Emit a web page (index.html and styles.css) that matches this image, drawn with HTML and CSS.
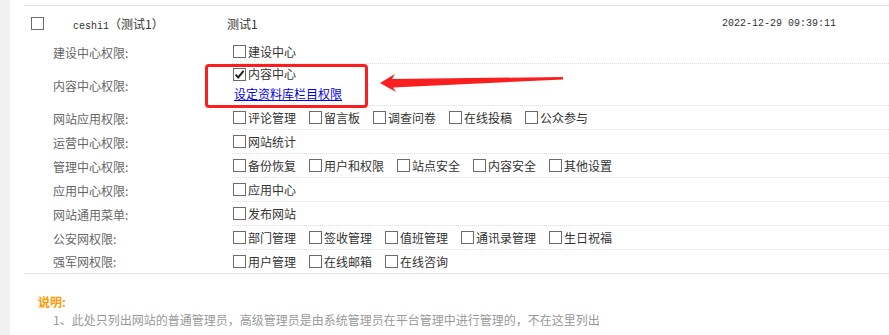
FILE: index.html
```html
<!DOCTYPE html>
<html lang="zh-CN">
<head>
  <meta charset="UTF-8">
  <title>管理员权限</title>
  <link rel="stylesheet" href="styles.css">
</head>
<body>
  <div class="main">
    <div class="user-table">
      <div class="user-row">
        <span class="col-check"><input type="checkbox" class="cb"></span>
        <span class="col-name"><span class="mono">ceshi1</span>（测试1）</span>
        <span class="col-title">测试1</span>
        <span class="col-date mono">2022-12-29 09:39:11</span>
      </div>

      <div class="perm-row">
        <div class="perm-label">建设中心权限:</div>
        <div class="perm-items">
          <label class="item"><input type="checkbox" class="cb">建设中心</label>
        </div>
      </div>

      <div class="perm-row">
        <div class="perm-label">内容中心权限:</div>
        <div class="perm-items perm-items-stack">
          <label class="item"><input type="checkbox" class="cb" checked>内容中心</label>
          <a href="#" class="perm-link">设定资料库栏目权限</a>
        </div>
      </div>

      <div class="perm-row">
        <div class="perm-label">网站应用权限:</div>
        <div class="perm-items">
          <label class="item"><input type="checkbox" class="cb">评论管理</label>
          <label class="item"><input type="checkbox" class="cb">留言板</label>
          <label class="item"><input type="checkbox" class="cb">调查问卷</label>
          <label class="item"><input type="checkbox" class="cb">在线投稿</label>
          <label class="item"><input type="checkbox" class="cb">公众参与</label>
        </div>
      </div>

      <div class="perm-row">
        <div class="perm-label">运营中心权限:</div>
        <div class="perm-items">
          <label class="item"><input type="checkbox" class="cb">网站统计</label>
        </div>
      </div>

      <div class="perm-row">
        <div class="perm-label">管理中心权限:</div>
        <div class="perm-items">
          <label class="item"><input type="checkbox" class="cb">备份恢复</label>
          <label class="item"><input type="checkbox" class="cb">用户和权限</label>
          <label class="item"><input type="checkbox" class="cb">站点安全</label>
          <label class="item"><input type="checkbox" class="cb">内容安全</label>
          <label class="item"><input type="checkbox" class="cb">其他设置</label>
        </div>
      </div>

      <div class="perm-row">
        <div class="perm-label">应用中心权限:</div>
        <div class="perm-items">
          <label class="item"><input type="checkbox" class="cb">应用中心</label>
        </div>
      </div>

      <div class="perm-row">
        <div class="perm-label">网站通用菜单:</div>
        <div class="perm-items">
          <label class="item"><input type="checkbox" class="cb">发布网站</label>
        </div>
      </div>

      <div class="perm-row">
        <div class="perm-label">公安网权限:</div>
        <div class="perm-items">
          <label class="item"><input type="checkbox" class="cb">部门管理</label>
          <label class="item"><input type="checkbox" class="cb">签收管理</label>
          <label class="item"><input type="checkbox" class="cb">值班管理</label>
          <label class="item"><input type="checkbox" class="cb">通讯录管理</label>
          <label class="item"><input type="checkbox" class="cb">生日祝福</label>
        </div>
      </div>

      <div class="perm-row perm-row-last">
        <div class="perm-label">强军网权限:</div>
        <div class="perm-items">
          <label class="item"><input type="checkbox" class="cb">用户管理</label>
          <label class="item"><input type="checkbox" class="cb">在线邮箱</label>
          <label class="item"><input type="checkbox" class="cb">在线咨询</label>
        </div>
      </div>
    </div>

    <div class="notes">
      <div class="notes-title">说明:</div>
      <div class="notes-line">1、此处只列出网站的普通管理员，高级管理员是由系统管理员在平台管理中进行管理的，不在这里列出</div>
    </div>

    <!-- annotation overlay -->
    <div class="mark-box"></div>
    <svg class="mark-arrow" width="200" height="24" viewBox="0 0 200 24">
      <polygon points="0,13 15,4 12,9 183,7 183,9.5 13,17.5 16,22" fill="#fa1e1e"/>
    </svg>
  </div>
</body>
</html>
```

FILE: styles.css
```css
* {
  margin: 0;
  padding: 0;
  box-sizing: border-box;
}

body {
  background-color: #f1f1f1;
  font-family: "Noto Sans CJK SC", "Noto Sans", sans-serif;
  font-size: 12px;
  color: #333;
  overflow: hidden;
}

.main {
  position: relative;
  margin-left: 10px;
  height: 335px;
  padding-top: 5px;
  background: white;
}

.mono {
  font-family: "Liberation Mono", monospace;
  font-size: 10px;
}

/* Checkbox */
.cb {
  appearance: none;
  -webkit-appearance: none;
  width: 13px;
  height: 13px;
  border: 1px solid #6b6b6b;
  background: white;
  flex: none;
  margin: 0;
}

.cb:checked {
  background: white url("data:image/svg+xml;utf8,<svg xmlns='http://www.w3.org/2000/svg' width='11' height='11' viewBox='0 0 11 11'><path d='M1.6 5.6 L4.2 8.4 L9.6 1.8' fill='none' stroke='%23222' stroke-width='2'/></svg>") no-repeat center;
}

/* Table */
.user-table {
  margin-left: 14px;
  border-top: 1px solid #e4e4e4;
  border-bottom: 1px solid #e4e4e4;
}

.user-row {
  display: flex;
  align-items: center;
  height: 34px;
}

.col-check {
  display: flex;
  width: 49px;
  padding-left: 7px;
}

.col-name {
  width: 154px;
}

.col-title {
  width: 495px;
}

.perm-row {
  display: grid;
  grid-template-columns: 208px 1fr;
}

.perm-label {
  display: flex;
  align-items: center;
  padding-left: 29px;
  color: #666;
}

.perm-items {
  display: flex;
  align-items: center;
  flex-wrap: wrap;
  height: 24px;
  padding-left: 1px;
  border-bottom: 1px dotted #dcdcdc;
}

.perm-items-stack {
  flex-direction: column;
  align-items: flex-start;
  justify-content: flex-start;
  height: 42px;
  line-height: 20px;
}

.perm-row-last .perm-items {
  height: 23px;
  border-bottom: none;
}

.item {
  display: inline-flex;
  align-items: center;
  gap: 2px;
  margin-right: 13px;
  height: 20px;
}

.perm-link {
  color: #0000ee;
  text-decoration: underline;
  margin-left: 1px;
}

/* Notes */
.notes {
  padding-top: 19px;
  line-height: 18px;
}

.notes-title {
  padding-left: 28px;
  color: #ff9900;
  font-weight: bold;
}

.notes-line {
  padding-left: 43px;
  color: #999;
}

/* Annotation */
.mark-box {
  position: absolute;
  left: 195px;
  top: 64px;
  width: 163px;
  height: 44px;
  border: 3px solid #fa1e1e;
  border-radius: 4px;
}

.mark-arrow {
  position: absolute;
  left: 370px;
  top: 70px;
}
```
